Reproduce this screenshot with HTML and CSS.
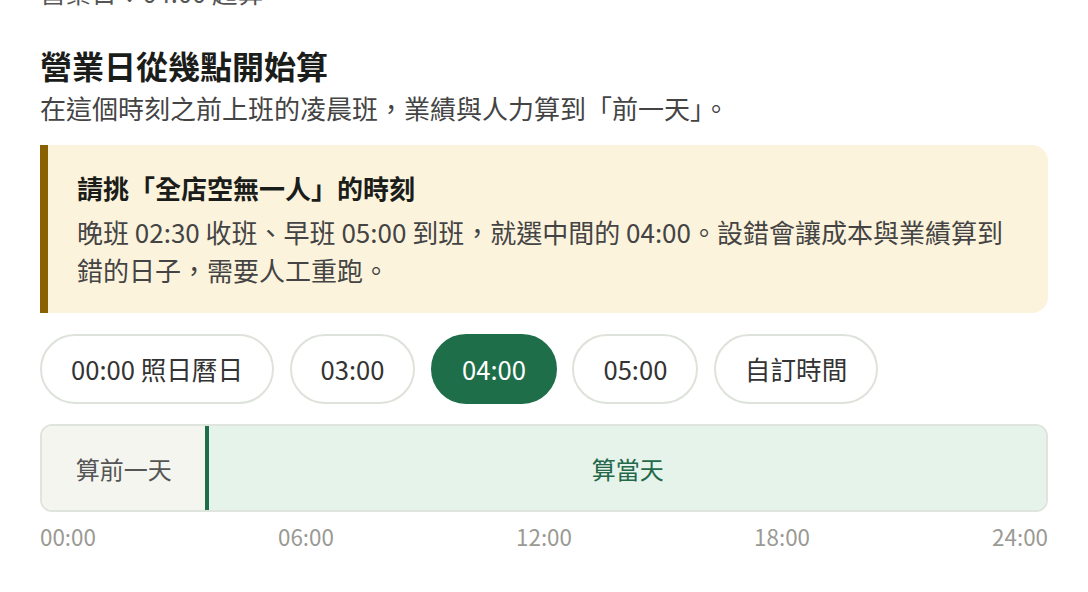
FILE: index.html
```html
<!DOCTYPE html>
<html lang="zh-Hant">
<head>
<meta charset="UTF-8" />
<meta name="viewport" content="width=device-width, initial-scale=1" />
<title>營業日設定</title>
<link rel="stylesheet" href="styles.css">
</head>
<body>
<div class="page">
  <div class="prev-line">營業日：04:00 起算</div>

  <h2 class="title">營業日從幾點開始算</h2>
  <p class="subtitle">在這個時刻之前上班的凌晨班，業績與人力算到「前一天」。</p>

  <div class="callout">
    <div class="callout-title">請挑「全店空無一人」的時刻</div>
    <p class="callout-body">晚班 02:30 收班、早班 05:00 到班，就選中間的 04:00。設錯會讓成本與業績算到錯的日子，需要人工重跑。</p>
  </div>

  <div class="options">
    <button class="opt">00:00 照日曆日</button>
    <button class="opt">03:00</button>
    <button class="opt active">04:00</button>
    <button class="opt">05:00</button>
    <button class="opt">自訂時間</button>
  </div>

  <div class="timeline">
    <div class="seg prev" style="width: 16.6667%">算前一天</div>
    <div class="seg today">算當天</div>
  </div>
  <div class="axis">
    <span>00:00</span>
    <span>06:00</span>
    <span>12:00</span>
    <span>18:00</span>
    <span>24:00</span>
  </div>
</div>
</body>
</html>
```

FILE: styles.css
```css
body {
  margin: 0;
  background: #fff;
  font-family: "Noto Sans CJK TC", "Noto Sans", sans-serif;
  color: #222;
  overflow: hidden;
}
.page {
  padding: 0 40px;
}
.prev-line {
  margin-top: -27px;
  font-size: 25.6px;
  line-height: 38.4px;
  color: #555;
}
.title {
  margin: 34px 0 0;
  font-size: 32px;
  line-height: 41.6px;
  font-weight: 700;
  color: #1b1d1a;
}
.subtitle {
  margin: 2px 0 0;
  font-size: 26px;
  line-height: 38.4px;
  color: #444;
}
.callout {
  margin-top: 18px;
  background: #fcf3dd;
  border-left: 8px solid #8a6100;
  border-radius: 0 16px 16px 0;
  padding: 24px 29px;
}
.callout-title {
  font-size: 26px;
  line-height: 38px;
  font-weight: 700;
  color: #1b1d1a;
}
.callout-body {
  margin: 6px 0 0;
  font-size: 26px;
  line-height: 38px;
  color: #444;
}
.options {
  display: flex;
  gap: 15.5px;
  margin-top: 21px;
}
.opt {
  font-family: inherit;
  font-size: 25.6px;
  line-height: 38px;
  padding: 14px 29px;
  border: 2px solid #dde2da;
  border-radius: 40px;
  background: #fff;
  color: #333;
  cursor: pointer;
}
.opt.active {
  background: #1f6e4a;
  border-color: #1f6e4a;
  color: #fff;
}
.timeline {
  display: flex;
  margin-top: 20px;
  height: 84px;
  border: 2px solid #dfe4dc;
  border-radius: 12px;
  overflow: hidden;
}
.seg {
  display: flex;
  align-items: center;
  justify-content: center;
  font-size: 24px;
}
.seg.prev {
  background: #f5f5f0;
  color: #555;
  border-right: 4px solid #1f6e4a;
  box-sizing: border-box;
}
.seg.today {
  flex: 1;
  background: #e6f3ea;
  color: #24684a;
}
.axis {
  display: flex;
  justify-content: space-between;
  margin-top: 8px;
  font-size: 22.4px;
  line-height: 33.6px;
  color: #9a9a94;
}
```
